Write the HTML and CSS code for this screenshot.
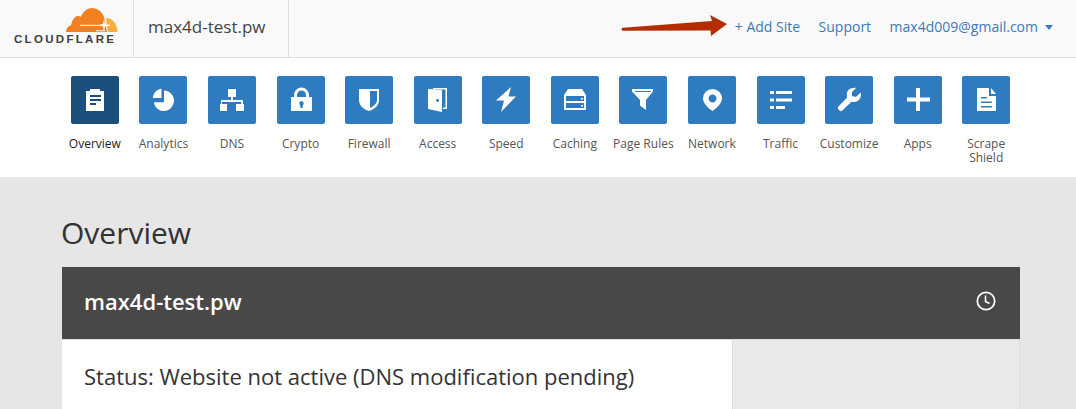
FILE: index.html
```html
<!DOCTYPE html>
<html lang="en">
<head>
    <meta charset="UTF-8">
    <title>Overview | max4d-test.pw</title>
    <link rel="stylesheet" href="styles.css">
</head>
<body>
    <header class="topbar">
        <div class="logo">
            <svg class="logo-cloud" width="52" height="25" viewBox="0 0 52 25">
                <path fill="#f38020" d="M0 24c0-3 2-6 5-6.500 1-5 3.500-9.500 7-9.500 1.200 0 2 .2 3 .7C17 3.500 21 0 26 0c5.500 0 10 3.500 12 9l3 15z"/>
                <path fill="#faae40" d="M40 10c6 0 11.500 6 11.500 14H42z"/>
                <path fill="none" stroke="#fff" stroke-width="1" d="M14 17.300h30M30 22.800h9"/>
                <path fill="#fff" d="M38 11l1 5 5 1.300-5 1.200-1 5.500-1-5.500-4-1.200 4-1.300z"/>
            </svg>
            <div class="logo-text">CLOUDFLARE</div>
        </div>
        <div class="site-name">max4d-test.pw</div>
        <nav class="top-links">
            <a href="#">+ Add Site</a>
            <a href="#">Support</a>
            <a href="#">max4d009@gmail.com<span class="caret"></span></a>
        </nav>
        <svg class="arrow" width="108" height="26" viewBox="0 0 108 26">
            <path fill="#b32d00" d="M2 14.700L91 8 89 2l17 9-16 12-.5-5.500-87.500.2c-1.800 0-2-2.800 0-3z"/>
        </svg>
    </header>

    <!-- Главное меню -->
    <nav class="apps">
        <a class="app active" href="#">
            <span class="tile"><svg viewBox="0 0 48 48"><path fill="#fff" d="M15 15h4v-2h10v2h4v20H15z"/><path fill="#1d4f7c" d="M19 19h11v2H19zM19 23h11v2H19zM19 27h6v2h-6z"/></svg></span>
            Overview
        </a>
        <a class="app" href="#">
            <span class="tile"><svg viewBox="0 0 48 48"><path fill="#fff" d="M14 22c0-5 4-9 8.500-9.300V22zM25 14.500c5.300.2 10 4.500 10 10 0 5.800-4.700 10.500-10 10.500-5.300 0-9.500-3.800-10-8.800h10z"/></svg></span>
            Analytics
        </a>
        <a class="app" href="#">
            <span class="tile"><svg viewBox="0 0 48 48"><path fill="#fff" d="M20 13h8v8h-3v3h10v4h1v7h-8v-7h5v-2H14v2h5v7h-7v-7h1v-4h10v-3h-3z"/></svg></span>
            DNS
        </a>
        <a class="app" href="#">
            <span class="tile"><svg viewBox="0 0 48 48"><path fill="#fff" fill-rule="evenodd" d="M14 21h3v-2a7.500 7.500 0 0 1 15 0v2h3v14H14zM20 21h9v-2a4.500 4.500 0 0 0-9 0zM24.500 25a2.300 2.300 0 0 0-1.200 4.200V32h2.400v-2.800a2.300 2.300 0 0 0-1.200-4.200z"/></svg></span>
            Crypto
        </a>
        <a class="app" href="#">
            <span class="tile"><svg viewBox="0 0 48 48"><path fill="#fff" fill-rule="evenodd" d="M14 13h20v11c0 5-4 9-10 11-6-2-10-6-10-11zM25 15v17c4-2 7-4.500 7-8v-9z"/></svg></span>
            Firewall
        </a>
        <a class="app" href="#">
            <span class="tile"><svg viewBox="0 0 48 48"><path fill="#fff" fill-rule="evenodd" d="M14 13l14 1v22l-14-3zM23.500 23a1.500 1.500 0 1 0 .1 0z"/><path fill="#fff" d="M19 12h14v21h-4v-1.500h2.500V13.500H19z"/></svg></span>
            Access
        </a>
        <a class="app" href="#">
            <span class="tile"><svg viewBox="0 0 48 48"><path fill="#fff" d="M29 11l-2.500 9.500H34L19 36l3-11.500h-8z"/></svg></span>
            Speed
        </a>
        <a class="app" href="#">
            <span class="tile"><svg viewBox="0 0 48 48"><path fill="#fff" fill-rule="evenodd" d="M17 13h14l4 6v15H13V19zM15 20v5h18v-5zM15 27v5h18v-5zM30 22h2v1.500h-2zM30 29h2v1.500h-2z"/></svg></span>
            Caching
        </a>
        <a class="app" href="#">
            <span class="tile"><svg viewBox="0 0 48 48"><path fill="#fff" fill-rule="evenodd" d="M13 13h21v2.500L27 24v10l-6-4.500V24l-8-8.500zM15.500 15l.8 1h15l.8-1z"/></svg></span>
            Page Rules
        </a>
        <a class="app" href="#">
            <span class="tile"><svg viewBox="0 0 48 48"><path fill="#fff" fill-rule="evenodd" d="M24.500 13a9.500 9.500 0 0 1 9.500 9.500c0 4.500-5 9.500-9.500 12.500-4.500-3-9.500-8-9.500-12.500a9.500 9.500 0 0 1 9.500-9.500zM24.500 18.500a4 4 0 1 0 .1 0z"/></svg></span>
            Network
        </a>
        <a class="app" href="#">
            <span class="tile"><svg viewBox="0 0 48 48"><path fill="#fff" d="M13 15h4v3h-4zM19 15h16v3H19zM13 22.500h4v3h-4zM19 22.500h16v3H19zM13 30h4v3h-4zM19 30h9v3h-9z"/></svg></span>
            Traffic
        </a>
        <a class="app" href="#">
            <span class="tile"><svg viewBox="0 0 48 48"><path fill="#fff" d="M29 12c-4.500-.3-7.500 3-7.200 7l.3 2.500L13 31c-1.200 1.300 2.500 5 3.800 4l9.700-9.300c4.500 1.500 9.800-1.800 9.500-7.700l-.4-1.500-4.600 4.500-4-1v-4l4.500-4.500z"/></svg></span>
            Customize
        </a>
        <a class="app" href="#">
            <span class="tile"><svg viewBox="0 0 48 48"><path fill="#fff" d="M22 12h4v9.500h10v4H26V35h-4v-9.500H13v-4h9z"/></svg></span>
            Apps
        </a>
        <a class="app" href="#">
            <span class="tile"><svg viewBox="0 0 48 48"><path fill="#fff" fill-rule="evenodd" d="M15 12h12v8h7v15H15zM29 12l5 6h-5zM19 21v1.500h6V21zM19 25.500V27h11v-1.500zM19 30v1.500h11V30z"/></svg></span>
            Scrape<br>Shield
        </a>
    </nav>

    <main class="content">
        <h1>Overview</h1>
        <section class="card">
            <div class="card-head">
                <h2>max4d-test.pw</h2>
                <svg class="clock" width="20" height="20" viewBox="0 0 20 20">
                    <circle cx="10" cy="10" r="8.700" fill="none" stroke="#fff" stroke-width="1.700"/>
                    <path fill="none" stroke="#fff" stroke-width="1.600" d="M9.500 4.500v6l4 2"/>
                </svg>
            </div>
            <div class="card-body">
                <div class="status">Status: Website not active (DNS modification pending)</div>
                <div class="side"></div>
            </div>
        </section>
    </main>
</body>
</html>
```

FILE: styles.css
```css
body {
    font-family: 'Open Sans', Arial, sans-serif;
    margin: 0;
    padding: 0;
    background-color: #e6e6e6;
    color: #333;
}
a {
    text-decoration: none;
}
.topbar {
    position: relative;
    display: flex;
    align-items: stretch;
    height: 57px;
    background-color: #f9f9f9;
    border-bottom: 1px solid #dedede;
}
.logo {
    box-sizing: border-box;
    width: 134px;
    padding: 8px 0 0 14px;
    border-right: 1px solid #dedede;
}
.logo-cloud {
    display: block;
    margin-left: 52px;
}
.logo-text {
    margin-top: 1px;
    font-family: 'Liberation Sans', Arial, sans-serif;
    font-size: 11.5px;
    font-weight: 700;
    line-height: 11px;
    letter-spacing: 2.3px;
    white-space: nowrap;
    color: #404041;
}
.site-name {
    box-sizing: border-box;
    width: 155px;
    padding-left: 14px;
    border-right: 1px solid #dedede;
    font-size: 17px;
    line-height: 54px;
    color: #444;
}
.top-links {
    display: flex;
    gap: 18.5px;
    margin-left: auto;
    padding-right: 23px;
    font-size: 14px;
    line-height: 54px;
}
.top-links a {
    color: #3d7ab5;
}
.caret {
    display: inline-block;
    margin-left: 7px;
    vertical-align: 2px;
    border-top: 5px solid #3d7ab5;
    border-left: 4.5px solid transparent;
    border-right: 4.5px solid transparent;
}
.arrow {
    position: absolute;
    left: 621px;
    top: 13px;
}
.apps {
    box-sizing: border-box;
    display: grid;
    grid-template-columns: repeat(14, 68.57px);
    height: 119px;
    padding: 18px 0 0 60.6px;
    background-color: #fff;
}
.app {
    display: block;
    text-align: center;
    font-size: 12px;
    line-height: 14px;
    color: #555;
}
.app.active {
    color: #222;
}
.tile {
    display: block;
    width: 48px;
    height: 48px;
    margin: 0 auto 13px;
    background-color: #2f7bbf;
    border-radius: 2px;
}
.active .tile {
    background-color: #1d4f7c;
}
.tile svg {
    display: block;
    width: 48px;
    height: 48px;
}
.content {
    width: 958px;
    margin-left: 62px;
}
h1 {
    margin: 0 0 0 -1px;
    padding-top: 36px;
    font-size: 30px;
    font-weight: 400;
    line-height: 40px;
    color: #333;
}
.card {
    margin-top: 14px;
}
.card-head {
    box-sizing: border-box;
    display: flex;
    align-items: center;
    justify-content: space-between;
    height: 72px;
    padding: 0 24px 4px 22px;
    background-color: #484848;
}
h2 {
    margin: 0;
    font-size: 22px;
    font-weight: 600;
    color: #fff;
}
.clock {
    display: block;
}
.card-body {
    display: flex;
    height: 69px;
    border-top: 1px solid #e0e0e0;
}
.status {
    box-sizing: border-box;
    width: 670px;
    padding: 19px 0 0 22px;
    background-color: #fff;
    font-size: 22px;
    line-height: 34px;
    color: #333;
}
.side {
    flex: 1;
    background-color: #eaeaea;
    border-left: 1px solid #dedede;
    border-right: 1px solid #dedede;
}
```
